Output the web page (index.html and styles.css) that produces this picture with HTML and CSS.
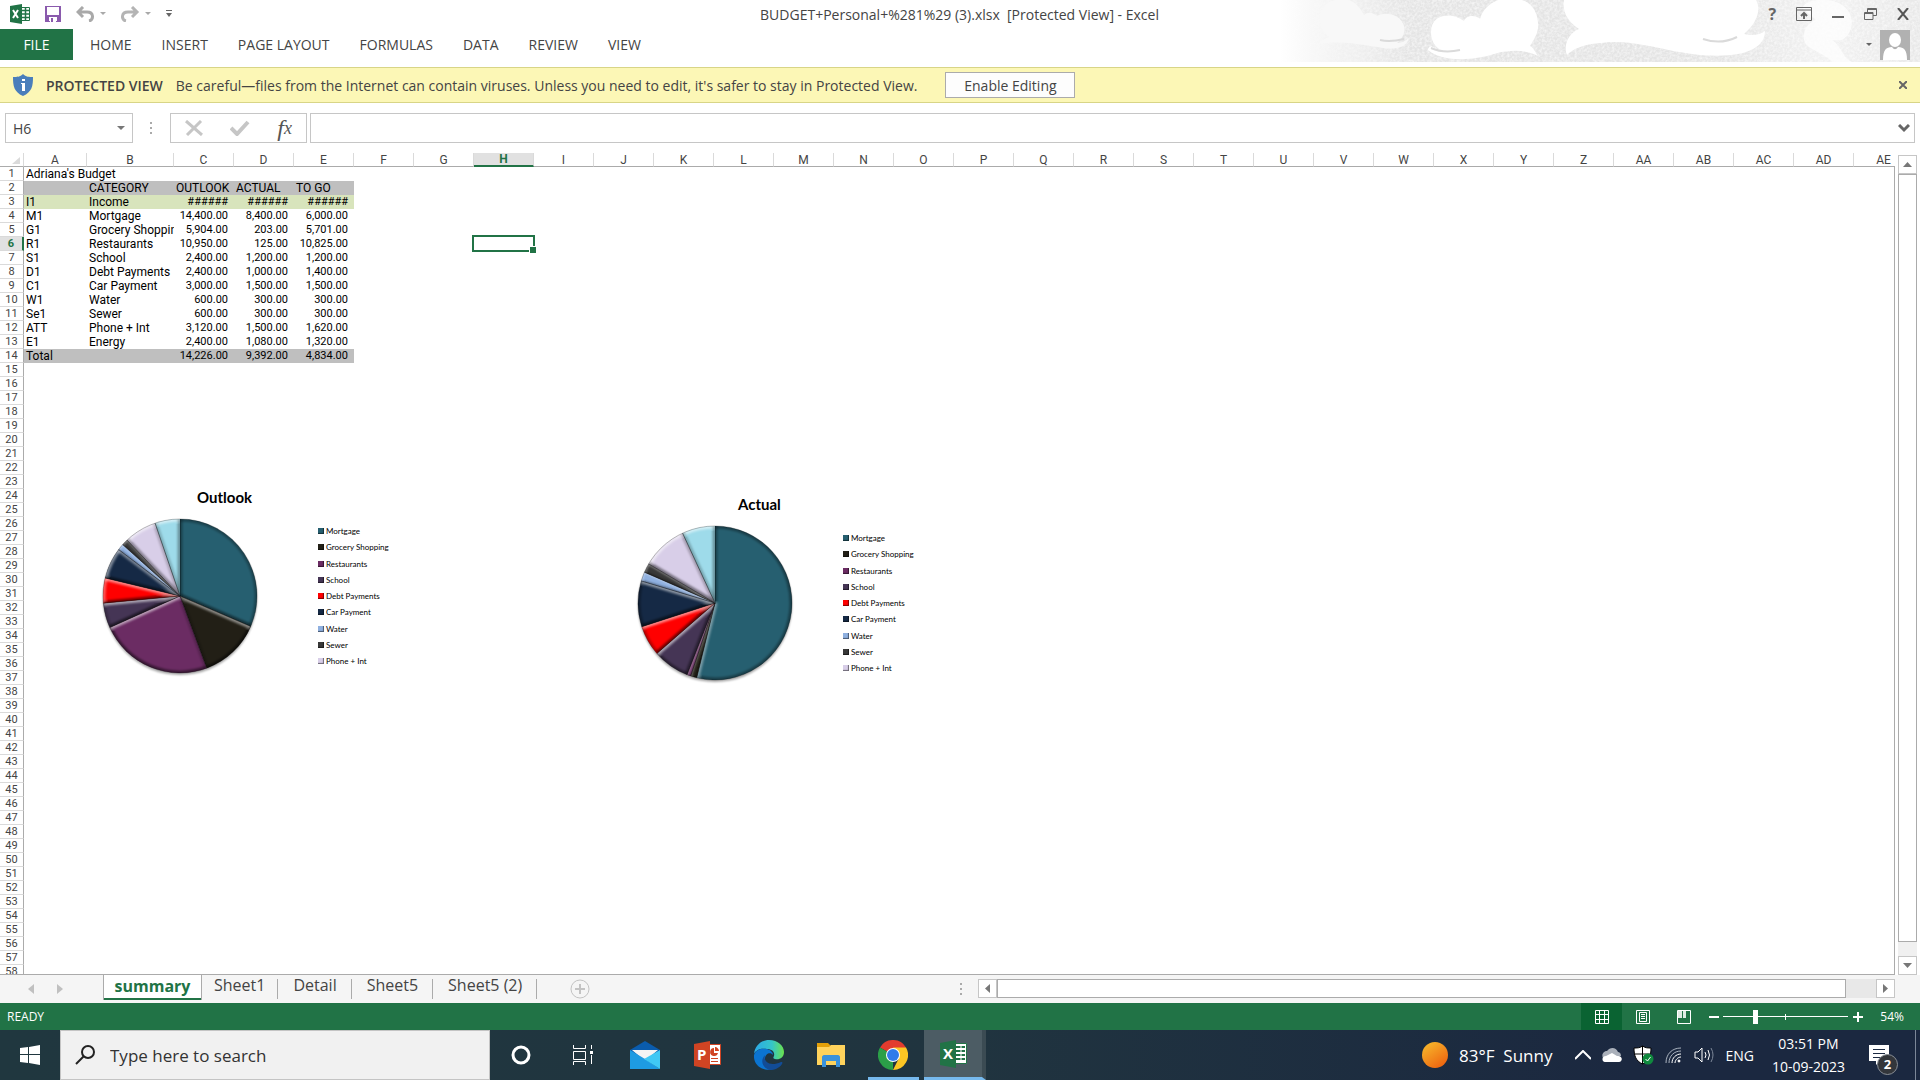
FILE: index.html
```html
<!DOCTYPE html>
<html lang="en">

<head>
    <meta charset="UTF-8">
    <meta name="viewport" content="width=device-width, initial-scale=1.0">
    <title>BUDGET+Personal+%281%29 (3).xlsx - Excel</title>
    <link rel="stylesheet" href="styles.css">
</head>

<body>
    <!-- Title bar and ribbon tabs -->
    <header class="top">
        <svg class="clouds" viewBox="0 0 640 62" preserveAspectRatio="none" aria-hidden="true">
            <defs>
                <linearGradient id="sky" x1="0" x2="1" y1="0" y2="0">
                    <stop offset="0" stop-color="#e4e4e4" stop-opacity="0" />
                    <stop offset="0.2" stop-color="#e4e4e4" />
                    <stop offset="0.7" stop-color="#e4e4e4" />
                    <stop offset="0.85" stop-color="#f2f2f2" />
                    <stop offset="1" stop-color="#e8e8e8" />
                </linearGradient>
                <filter id="grain" x="0" y="0" width="100%" height="100%">
                    <feTurbulence type="fractalNoise" baseFrequency="0.4" numOctaves="2" result="n" />
                    <feColorMatrix in="n" type="matrix" values="0 0 0 0 1  0 0 0 0 1  0 0 0 0 1  1.2 0 0 0 -0.4" result="w" />
                    <feComposite in="w" in2="SourceAlpha" operator="in" result="g" />
                    <feMerge><feMergeNode in="SourceGraphic" /><feMergeNode in="g" /></feMerge>
                </filter>
            </defs>
            <rect width="640" height="62" fill="url(#sky)" filter="url(#grain)" />
            <path fill="#f8f8f8" d="M40 22C38 8 48 0 58 0h10c8 2 13 9 16 15c4-4 10-2 13 1c8-5 24-2 27 10c2 8-3 13-7 17c6 0 9-3 12-5c-2 10-16 12-26 10c-20-3-40-8-64-4c2-4 6-5 10-7c-6-5-9-10-9-15z" />
            <path fill="#fff" d="M151 32c0-14 12-18 22-16c5 1 8 3 11 5c2-5 10-7 16-2c2-8 8-15 18-19h24c12 4 17 16 16 28c-1 8-6 14-8 18c4 2 5 6 8 10c-12-7-30-6-44-2c-22 7-52 8-66-4c0-3 2-3 3-4c3 2 6 3 8 3c-5-4-8-9-8-17z" />
            <path fill="#fff" d="M284 0h192c6 10 0 24-12 34c8 2 16 1 21-3c0 14-14 22-34 24c-50 5-90-18-130-12c-18 1-28 6-34 12c-4-10 2-22 12-26c-12-8-17-18-15-29z" />
            <path fill="#fff" d="M522 8c6-12 40-12 48 6c6 14-4 24-8 26h-10c10 6 10 18 20 22h-20c-8-10-26-12-28-22c-2-16 12-20 12-20z" opacity="0.7" />
            <path fill="none" stroke="#dadada" stroke-width="2" d="M423 39c12 4 24 3 34-2M151 48c9 4 20 4 29 2M100 40c8 2 16 1 24-1" />
        </svg>
        <div class="titlebar">
            <div class="quick">
                <svg width="20" height="20" viewBox="0 0 20 20"><path fill="#fff" stroke="#217346" d="M11 3.500h8.500v13H11z" /><path stroke="#217346" stroke-width="1.500" d="M12 6.500h7M12 10h7M12 13.500h7M15.500 4v12" /><path fill="#217346" d="M0 2l12-2v20L0 18z" /><path stroke="#fff" stroke-width="2" d="M3 6l5 8M8 6l-5 8" /></svg>
                <button class="icon save" aria-label="Save"><svg width="16" height="16" viewBox="0 0 16 16"><path fill="#8a5aad" d="M0 0h16v16H0z" /><path fill="#fff" d="M2 1h12v8H2zM4 11h8v5H4z" /><path fill="#8a5aad" d="M6 12h2v4H6zM4 15h1v1H4zM11 15h1v1h-1z" /></svg></button>
                <button class="icon" aria-label="Undo"><svg width="30" height="16" viewBox="0 0 30 16"><path fill="none" stroke="#a9a9a9" stroke-width="3" d="M7 1L2 6l5 5M2 6h9c7 0 7 8 2 9" /><path fill="#a9a9a9" d="M24 6h6l-3 3z" /></svg></button>
                <button class="icon" aria-label="Redo"><svg width="30" height="16" viewBox="0 0 30 16"><path fill="none" stroke="#b4b4b4" stroke-width="3" d="M11 1l5 5l-5 5M16 6H7c-7 0-7 8-2 9" /><path fill="#a9a9a9" d="M24 6h6l-3 3z" /></svg></button>
                <button class="icon" aria-label="Customize toolbar"><svg width="6" height="8" viewBox="0 0 6 8"><path fill="#666" d="M0 0h6v1H0zM0 3h6L3 7z" /></svg></button>
            </div>
            <h1>BUDGET+Personal+%281%29 (3).xlsx&nbsp; [Protected View] - Excel</h1>
            <div class="window-buttons">
                <button class="icon help" aria-label="Help">?</button>
                <button class="icon" aria-label="Ribbon options"><svg width="16" height="14" viewBox="0 0 16 14" fill="none" stroke="#666"><path d="M.5.500h15v13H.5zM1 3h14" /><path stroke-width="2" d="M8 12V6M5 9l3-3l3 3" /></svg></button>
                <button class="icon" aria-label="Minimize"><svg width="12" height="14" viewBox="0 0 12 14"><path fill="#666" d="M0 9h12v2H0z" /></svg></button>
                <button class="icon" aria-label="Restore"><svg width="13" height="12" viewBox="0 0 13 12" fill="none" stroke="#666"><path d="M3.500 4V.5h9v7H9M.5 4.500H9v7H.5z" /><path d="M3 1.500h10M0 5.500h9" /></svg></button>
                <button class="icon" aria-label="Close"><svg width="12" height="12" viewBox="0 0 12 12" stroke="#555" stroke-width="2"><path d="M1 0l10 12M11 0L1 12" /></svg></button>
            </div>
        </div>
        <nav class="ribbon">
            <a class="file" href="#file">FILE</a>
            <a href="#home">HOME</a>
            <a href="#insert">INSERT</a>
            <a href="#layout">PAGE LAYOUT</a>
            <a href="#formulas">FORMULAS</a>
            <a href="#data">DATA</a>
            <a href="#review">REVIEW</a>
            <a href="#view">VIEW</a>
            <button class="icon account" aria-label="Account">
                <svg width="6" height="4" viewBox="0 0 6 4"><path fill="#666" d="M0 0h6L3 3z" /></svg>
                <svg width="30" height="30" viewBox="0 0 30 30"><path fill="#b1b1b1" d="M0 0h30v30H0z" /><ellipse cx="15" cy="10" rx="6" ry="7" fill="#fff" /><path fill="#fff" d="M3 30c0-10 3-13 9-13c2 3 4 3 6 0c6 0 9 3 9 13z" /></svg>
            </button>
        </nav>
    </header>

    <!-- Protected view message -->
    <div class="protected">
        <svg width="20" height="22" viewBox="0 0 20 22"><path fill="#4a7ebb" d="M10 0c3 3 6 3 10 3c0 9-1 15-10 19C1 18 0 12 0 3c4 0 7 0 10-3z" /><path fill="#fff" d="M9 5h3v2H9zM8 9h4v8H9v-7H8z" /></svg>
        <strong>PROTECTED VIEW</strong>
        <span>Be careful—files from the Internet can contain viruses. Unless you need to edit, it's safer to stay in Protected View.</span>
        <button class="enable">Enable Editing</button>
        <button class="icon dismiss" aria-label="Dismiss"><svg width="8" height="8" viewBox="0 0 8 8" stroke="#666" stroke-width="2"><path d="M0 0l8 8M8 0L0 8" /></svg></button>
    </div>

    <!-- Formula bar -->
    <div class="formula-bar">
        <div class="name-box">
            <input type="text" value="H6" aria-label="Name box">
            <svg width="8" height="5" viewBox="0 0 8 5"><path fill="#777" d="M0 0h8L4 4z" /></svg>
        </div>
        <svg class="grip" width="2" height="12" viewBox="0 0 2 12"><path fill="#aaa" d="M0 0h2v2H0zM0 5h2v2H0zM0 10h2v2H0z" /></svg>
        <div class="fx-box">
            <button class="icon" aria-label="Cancel"><svg width="18" height="16" viewBox="0 0 18 16" stroke="#c6c6c6" stroke-width="3"><path d="M1 1l16 14M16 1L2 15" /></svg></button>
            <button class="icon" aria-label="Enter"><svg width="20" height="16" viewBox="0 0 20 16" fill="none" stroke="#c6c6c6" stroke-width="4"><path d="M1 8l6 6L18 2" /></svg></button>
            <button class="icon fx" aria-label="Insert function">f<sub>x</sub></button>
        </div>
        <div class="formula">
            <input type="text" aria-label="Formula">
            <svg width="12" height="9" viewBox="0 0 12 9" fill="none" stroke="#666" stroke-width="3"><path d="M1 1l5 5l5-5" /></svg>
        </div>
    </div>

    <!-- Worksheet -->
    <main class="work">
        <div class="sheet">
            <table id="grid"></table>
            <div class="selection"></div>
            <section class="chart outlook">
                <h2>Outlook</h2>
                <div class="plot" id="outlook"></div>
            </section>
            <section class="chart actual">
                <h2>Actual</h2>
                <div class="plot" id="actual"></div>
            </section>
        </div>
        <div class="vscroll">
            <button class="arrow" aria-label="Scroll up"><svg width="9" height="5" viewBox="0 0 9 5"><path fill="#777" d="M0 5h9L4.500 0z" /></svg></button>
            <div class="vthumb"></div>
            <button class="arrow" aria-label="Scroll down"><svg width="9" height="5" viewBox="0 0 9 5"><path fill="#777" d="M0 0h9L4.500 5z" /></svg></button>
        </div>
    </main>

    <!-- Sheet tabs -->
    <div class="tabs">
        <div class="tab-arrows">
            <button class="icon" aria-label="Previous sheet"><svg width="6" height="10" viewBox="0 0 6 10"><path fill="#c0c0c0" d="M6 0v10L0 5z" /></svg></button>
            <button class="icon" aria-label="Next sheet"><svg width="6" height="10" viewBox="0 0 6 10"><path fill="#c0c0c0" d="M0 0v10l6-5z" /></svg></button>
        </div>
        <button class="tab active">summary</button>
        <button class="tab">Sheet1</button>
        <button class="tab">Detail</button>
        <button class="tab">Sheet5</button>
        <button class="tab">Sheet5 (2)</button>
        <button class="icon add" aria-label="New sheet"><svg width="20" height="20" viewBox="0 0 20 20" fill="none" stroke="#c3c3c3"><circle cx="10" cy="10" r="9" /><path stroke-width="2" d="M5 10h10M10 5v10" /></svg></button>
        <svg class="tab-grip" width="2" height="12" viewBox="0 0 2 12"><path fill="#aaa" d="M0 0h2v2H0zM0 5h2v2H0zM0 10h2v2H0z" /></svg>
        <div class="hscroll">
            <button class="arrow" aria-label="Scroll left"><svg width="5" height="9" viewBox="0 0 5 9"><path fill="#777" d="M5 0v9L0 4.500z" /></svg></button>
            <div class="hthumb"></div>
            <button class="arrow" aria-label="Scroll right"><svg width="5" height="9" viewBox="0 0 5 9"><path fill="#777" d="M0 0v9l5-4.500z" /></svg></button>
        </div>
    </div>

    <!-- Status bar -->
    <div class="status">
        <span class="ready">READY</span>
        <button class="view on" aria-label="Normal view"><svg width="14" height="14" viewBox="0 0 14 14" fill="none" stroke="#fff"><path d="M.5.500h13v13H.5zM4.500 0v14M9.500 0v14M0 4.500h14M0 9.500h14" /></svg></button>
        <button class="view" aria-label="Page layout view"><svg width="14" height="14" viewBox="0 0 14 14" fill="none" stroke="#fff"><path d="M.5.500h13v13H.5zM3.500 2.500h7v9h-7zM5 4.500h4M5 6.500h4M5 8.500h4" /></svg></button>
        <button class="view" aria-label="Page break view"><svg width="14" height="14" viewBox="0 0 14 14"><path fill="none" stroke="#fff" d="M.5.500h13v13H.5z" /><path fill="#e0ebe4" d="M1 1h4v7H1zM6 1h3v7H6z" /></svg></button>
        <button class="icon zoom-button" aria-label="Zoom out"><svg width="10" height="10" viewBox="0 0 10 10"><path fill="#fff" d="M0 4h10v2H0z" /></svg></button>
        <input class="zoom" type="range" min="10" max="400" value="106" aria-label="Zoom">
        <button class="icon zoom-button" aria-label="Zoom in"><svg width="10" height="10" viewBox="0 0 10 10"><path fill="#fff" d="M0 4h10v2H0zM4 0h2v10H4z" /></svg></button>
        <span class="percent">54%</span>
    </div>

    <!-- Windows taskbar -->
    <footer class="taskbar">
        <button class="icon start" aria-label="Start"><svg width="20" height="20" viewBox="0 0 20 20"><path fill="#fff" d="M0 3l8-1v7H0zM9 2l11-2v9H9zM0 10h8v8l-8-1zM9 10h11v10L9 18z" /></svg></button>
        <label class="search">
            <svg width="21" height="20" viewBox="0 0 21 20" fill="none" stroke="#222" stroke-width="2"><circle cx="13" cy="7" r="6" /><path d="M9 11l-8 8" /></svg>
            <input type="text" placeholder="Type here to search">
        </label>
        <button class="app" aria-label="Cortana"><svg width="20" height="20" viewBox="0 0 20 20"><circle cx="10" cy="10" r="8" fill="none" stroke="#fff" stroke-width="3" /></svg></button>
        <button class="app" aria-label="Task view"><svg width="20" height="20" viewBox="0 0 20 20" fill="none" stroke="#fff"><path d="M.5 0v3.500h12V0M.5 6.500h12v8H.5zM.5 20v-3.500h12V20M18.500 0v4M18.500 10v9" /><path fill="#fff" stroke="none" d="M17 6h3v3h-3z" /></svg></button>
        <button class="app" aria-label="Mail"><svg width="30" height="28" viewBox="0 0 30 28"><path fill="#0a5cad" d="M0 9L15 0l15 9v6H0z" /><path fill="#f4f4f4" d="M2 9h26L15 20z" /><path fill="#1e9be2" d="M0 9l15 9l15 10H0z" /><path fill="#40c8f4" d="M30 9v19L14 18z" /></svg></button>
        <button class="app" aria-label="PowerPoint"><svg width="27" height="28" viewBox="0 0 27 28"><path fill="#fff" stroke="#d04423" d="M14 3.500h12.500v20H14z" /><path fill="#d04423" d="M20 7a4 4 0 1 0 4 5h-4zM21 6c2 0 4 2 4 4h-4zM17 17h7v1h-7zM17 20h7v1h-7z" /><path fill="#d04423" d="M0 3l16-3v28L0 25z" /><text x="3" y="19" class="app-letter">P</text></svg></button>
        <button class="app" aria-label="Edge"><svg width="30" height="30" viewBox="0 0 30 30">
            <defs><linearGradient id="edge"><stop offset="0" stop-color="#2aa9e8" /><stop offset="0.600" stop-color="#35c5c8" /><stop offset="1" stop-color="#6be24c" /></linearGradient></defs>
            <path fill="url(#edge)" d="M0 14C1 5 8 0 15 0c9 0 15 6 15 12c0 6-5 8-9 7c-2-1-2-1-1-3c1-4-2-7-7-7C6 8 2 10 0 14z" /><path fill="#0b74d1" d="M0 15C2 9 8 8 13 9c4 1 6 4 6 6c-2-3-8-2-8 4c0 6 4 10 9 10C10 32-1 26 0 15z" /><path fill="#124c96" d="M11 15c-2 7 5 12 16 7c1 0 2 0 1 2c-3 5-9 6-12 6c-8-2-10-10-5-15z" /></svg></button>
        <button class="app" aria-label="File Explorer"><svg width="28" height="24" viewBox="0 0 28 24"><path fill="#e3a008" d="M0 0h11l3 3v3H0z" /><path fill="#ffd35c" d="M0 4h12l2-2h14v20H0z" /><path fill="#3a92dc" d="M5 24V14c0-1 1-2 2-2h14c1 0 2 1 2 2v10h-4v-6H9v6z" /></svg></button>
        <button class="app running" aria-label="Chrome"><svg width="30" height="30" viewBox="0 0 30 30"><path fill="#e33b2e" d="M15 15L2 7.500A15 15 0 0 1 28 7.500z" /><path fill="#2b9f48" d="M15 15v15A15 15 0 0 1 2 7.500z" /><path fill="#fcc624" d="M15 7.500h13A15 15 0 0 1 15 30l6-12z" /><circle cx="15" cy="15" r="7" fill="#fff" /><circle cx="15" cy="15" r="6" fill="#2f7bea" /></svg></button>
        <button class="app current" aria-label="Excel"><svg width="27" height="28" viewBox="0 0 27 28"><path fill="#fff" stroke="#217346" d="M14 3.500h12.500v20H14z" /><path stroke="#217346" stroke-width="2" d="M16 7h9M16 11h9M16 15h9M16 19h9" /><path stroke="#fff" d="M21 4v19" /><path fill="#217346" d="M0 3l16-3v28L0 25z" /><text x="3" y="19" class="app-letter">X</text></svg></button>

        <div class="tray">
            <svg class="sun" width="26" height="26" viewBox="0 0 26 26"><defs><linearGradient id="sun" x1="0" y1="0" x2="0.700" y2="1"><stop offset="0" stop-color="#f8c02e" /><stop offset="1" stop-color="#ee6510" /></linearGradient></defs><circle cx="13" cy="13" r="13" fill="url(#sun)" /></svg>
            <span class="weather">83°F&nbsp; Sunny</span>
            <svg class="chevron" width="16" height="10" viewBox="0 0 16 10" fill="none" stroke="#fff" stroke-width="2"><path d="M0 9l8-8l8 8" /></svg>
            <svg width="20" height="14" viewBox="0 0 20 14"><path fill="#aab0ba" d="M1 10c-2-4 1-7 4-7c3-4 9-4 11 1c3 0 3 4 3 4z" /><path fill="#fff" d="M3 14c-4-1-3-6 1-6l6-3l5 3c6-1 6 6 2 6z" /></svg>
            <svg width="21" height="20" viewBox="0 0 21 20"><path fill="#fff" stroke="#000" d="M9.500 1c3 2 5 2 8.500 2c0 8-2 13-8.500 16C3 16 1 11 1 3c3 0 6 0 8.500-2z" /><path stroke="#000" d="M9.500 1v18M1 9h17" /><circle cx="15" cy="14" r="5.500" fill="#10893e" /><path fill="none" stroke="#fff" d="M12.500 14l2 2l3-4" /></svg>
            <svg width="18" height="16" viewBox="0 0 18 16" fill="none" stroke="#aab3bf"><path d="M1 16C1 7 7 1 16 1M4 16c0-7 5-12 12-12" /><path stroke="#fff" d="M7 16c0-5 4-9 9-9M10 16c0-3 3-6 6-6" /><circle cx="14" cy="14" r="1" fill="#fff" stroke="#fff" /></svg>
            <svg width="20" height="16" viewBox="0 0 20 16" fill="none" stroke="#fff"><path d="M1 5h3l4-4v14l-4-4H1zM11 5q2 3 0 6M14 3q3 5 0 10" /><path stroke="#7c8798" d="M17 1q4 7 0 14" /></svg>
            <span class="lang">ENG</span>
            <div class="clock"><span>03:51 PM</span><span>10-09-2023</span></div>
            <button class="icon notes" aria-label="Notifications">
                <svg width="20" height="20" viewBox="0 0 20 20"><path fill="#fff" d="M0 0h20v16h-9l-4 4v-4H0z" /><path stroke="#1c2a42" d="M4 4.500h12M4 8.500h12M4 12.500h8" /></svg>
                <span class="badge">2</span>
            </button>
        </div>
    </footer>

    <script src="script.js"></script>
</body>

</html>
```
FILE: styles.css
```css
* {
    box-sizing: border-box;
}

body {
    margin: 0;
    height: 100vh;
    display: flex;
    flex-direction: column;
    overflow: hidden;
    background: #fff;
    color: #444;
    font-family: "Open Sans", "Noto Sans", sans-serif;
    font-size: 14px;
}

button,
input {
    font: inherit;
    color: inherit;
    margin: 0;
}

svg {
    display: block;
    flex: none;
}

.icon {
    display: flex;
    align-items: center;
    padding: 0;
    border: none;
    background: none;
}

/* Title bar */
.top {
    position: relative;
    flex: none;
    height: 67px;
}

.clouds {
    position: absolute;
    right: 0;
    top: 0;
    width: 640px;
    height: 62px;
    z-index: -1;
}

.titlebar {
    display: flex;
    align-items: center;
    height: 28px;
    padding: 0 11px 0 10px;
}

.quick,
.window-buttons {
    display: flex;
    align-items: center;
    flex: 1;
    gap: 15px;
}

.window-buttons {
    justify-content: flex-end;
    gap: 20px;
}

.titlebar h1 {
    margin: 0;
    font-size: 14px;
    font-weight: normal;
}

.help {
    font-size: 16px;
    font-weight: bold;
    color: #666;
}

.ribbon {
    display: flex;
    align-items: center;
    height: 31px;
    gap: 30px;
    margin-top: 1px;
    padding-right: 10px;
}

.ribbon a {
    color: #444;
    text-decoration: none;
}

.ribbon .file {
    width: 73px;
    margin-right: -13px;
    line-height: 31px;
    text-align: center;
    background: #217346;
    color: #fff;
}

.account {
    margin-left: auto;
    gap: 8px;
}

/* Protected view */
.protected {
    display: flex;
    align-items: center;
    flex: none;
    height: 36px;
    padding: 0 13px;
    border: solid #d8d587;
    border-width: 1px 0;
    background: #fcf7b6;
}

.protected strong {
    margin: 0 13px;
    font-weight: 600;
}

.enable {
    width: 130px;
    height: 26px;
    margin-left: 28px;
    padding: 0;
    border: 1px solid #ababab;
    background: #fdfdfd;
}

.dismiss {
    margin-left: auto;
}

/* Formula bar */
.formula-bar {
    display: flex;
    align-items: center;
    flex: none;
    height: 30px;
    margin: 10px 5px;
}

.name-box,
.fx-box,
.formula {
    display: flex;
    align-items: center;
    height: 30px;
    border: 1px solid #c6c6c6;
}

.name-box {
    width: 128px;
    padding: 0 7px;
}

.name-box input,
.formula input {
    flex: 1;
    width: 0;
    padding: 0;
    border: none;
    outline: none;
}

.grip {
    margin: 0 18px 0 17px;
}

.fx-box {
    width: 137px;
    padding: 0 14px;
    justify-content: space-between;
    margin-right: 3px;
}

.fx {
    font: italic 24px "Liberation Serif", serif;
    line-height: 28px;
    color: #555;
}

.fx sub {
    font-size: 18px;
    line-height: 16px;
}

.formula {
    flex: 1;
    padding: 0 4px;
}

/* Worksheet */
.work {
    display: flex;
    flex: 1;
    min-height: 0;
    background: #fff;
}

.sheet {
    position: relative;
    flex: 1;
    min-width: 0;
    overflow: hidden;
    border-bottom: 1px solid #ababab;
}

.sheet::after {
    content: "";
    position: absolute;
    top: 13px;
    right: 0;
    bottom: 0;
    border-right: 1px solid #ababab;
}

#grid {
    table-layout: fixed;
    width: 1914px;
    border-collapse: separate;
    border-spacing: 0;
    font-family: Roboto, sans-serif;
    font-size: 12px;
    line-height: 14px;
    color: #000;
}

#grid th,
#grid td {
    height: 14px;
    padding: 0;
    font-weight: normal;
    white-space: nowrap;
}

#grid thead th {
    padding-top: 1px;
    border-right: 1px solid #dadada;
    border-bottom: 1px solid #ababab;
    line-height: 12px;
    color: #444;
}

#grid tbody th {
    border-right: 1px solid #ababab;
    border-bottom: 1px solid #dadada;
    font-size: 11px;
    line-height: 13px;
    color: #444;
}

#grid thead .picked,
#grid tbody .picked {
    background: #e1e1e1;
    color: #217346;
    font-weight: bold;
}

#grid thead .picked {
    padding-top: 0;
    border-bottom: 2px solid #217346;
}

#grid tbody .picked {
    border-right: 2px solid #217346;
}

#grid tbody td {
    padding-left: 2px;
}

#grid tbody .clip {
    overflow: hidden;
}

#grid tbody .number {
    padding: 0 6px 0 0;
    font-size: 11px;
    text-align: right;
}

.gray {
    background: #bfbfbf;
}

.green {
    background: #d8e4bc;
}

.col-head {
    width: 24px;
}

.col-a {
    width: 63px;
}

.col-b {
    width: 87px;
}

.selection {
    position: absolute;
    left: 472px;
    top: 82px;
    width: 63px;
    height: 17px;
    border: 2px solid #217346;
}

.selection::after {
    content: "";
    position: absolute;
    right: -3px;
    bottom: -3px;
    width: 6px;
    height: 6px;
    border: solid #fff;
    border-width: 1px 0 0 1px;
    background: #217346;
}

/* Charts */
.chart {
    position: absolute;
    width: 300px;
    color: #000;
    font-family: Lato, sans-serif;
}

.outlook {
    left: 98px;
    top: 333px;
}

.actual {
    left: 633px;
    top: 340px;
}

.chart h2 {
    margin: 0 0 6px;
    padding-left: 99px;
    font-size: 15px;
    line-height: 22px;
    font-weight: bold;
}

.actual h2 {
    padding-left: 105px;
}

.plot {
    display: flex;
    gap: 55px;
}

.actual .plot {
    gap: 45px;
}

.legend {
    display: flex;
    flex-direction: column;
    justify-content: space-between;
    height: 140px;
    margin: 12px 0 0;
    padding: 0;
    list-style: none;
    font-size: 8px;
    line-height: 10px;
}

.legend li {
    display: flex;
    align-items: center;
    gap: 2px;
}

.swatch {
    width: 6px;
    height: 6px;
    box-shadow: inset -1px -1px 1px rgba(0, 0, 0, 0.5);
}

/* Scroll bars */
.vscroll {
    display: flex;
    flex-direction: column;
    justify-content: space-between;
    width: 19px;
    margin: 2px 3px 0 3px;
    background: #f0f0f0;
}

.vthumb {
    flex: 1;
    margin-bottom: 14px;
    border: 1px solid #ababab;
    background: #fff;
}

.arrow {
    display: flex;
    align-items: center;
    justify-content: center;
    flex: none;
    width: 19px;
    height: 19px;
    padding: 0;
    border: 1px solid #c6c6c6;
    background: #fff;
}

/* Sheet tabs */
.tabs {
    display: flex;
    flex: none;
    height: 28px;
    padding-right: 25px;
    background: #f5f5f5;
    font-size: 16px;
}

.tab-arrows {
    display: flex;
    gap: 23px;
    width: 103px;
    padding-left: 28px;
}

.tab {
    position: relative;
    height: 20px;
    padding: 0 15px;
    border: none;
    background: none;
    line-height: 20px;
}

.active + .tab {
    padding: 0 13px 0 12px;
}

.tab:not(.active)::after {
    content: "";
    position: absolute;
    right: 0;
    top: 4px;
    height: 20px;
    border-right: 1px solid #ababab;
}

.tab.active {
    height: 25px;
    width: 99px;
    padding: 0 0 4px;
    border: solid #ababab;
    border-width: 0 1px;
    box-shadow: inset 0 -2px #217346;
    background: #fff;
    color: #217346;
    font-weight: bold;
}

.add {
    margin-left: 33px;
}

.tab-grip {
    margin: 8px 16px 0 auto;
}

.hscroll {
    display: flex;
    width: 48.4%;
    margin: 4px 0 5px;
    background: #e8e8e8;
}

.hthumb {
    flex: 1;
    margin-right: 30px;
    border: 1px solid #ababab;
    background: #fff;
}

/* Status bar */
.status {
    display: flex;
    align-items: center;
    flex: none;
    height: 27px;
    padding-right: 16px;
    background: #217346;
    color: #fff;
    font-size: 12px;
}

.ready {
    flex: 1;
    padding-left: 7px;
}

.view {
    display: flex;
    align-items: center;
    justify-content: center;
    width: 41px;
    height: 27px;
    padding: 0;
    border: none;
    background: none;
}

.view.on {
    background: #0a6332;
}

.zoom-button {
    margin-left: 5px;
}

.zoom {
    appearance: none;
    width: 125px;
    height: 14px;
    margin: 0 0 0 4px;
    background: linear-gradient(#fff, #fff) 50% 50% / 1px 6px no-repeat, linear-gradient(#fff, #fff) 50% 50% / 100% 1px no-repeat;
}

.zoom::-webkit-slider-thumb {
    appearance: none;
    width: 5px;
    height: 14px;
    background: #fff;
}

.percent {
    width: 41px;
    text-align: right;
}

/* Taskbar */
.taskbar {
    display: flex;
    flex: none;
    height: 50px;
    background: linear-gradient(90deg, #20373f, #20343f 50%, #1b2840 85%);
    color: #fff;
}

.start {
    width: 60px;
    justify-content: center;
}

.search {
    display: flex;
    align-items: center;
    gap: 14px;
    width: 430px;
    padding: 0 14px;
    border: 1px solid #c4c4c4;
    background: #f1f1f1;
    color: #222;
}

.search input {
    flex: 1;
    width: 0;
    padding: 0;
    border: none;
    outline: none;
    background: none;
    font-size: 17px;
}

.search input::placeholder {
    color: #333;
}

.app {
    display: flex;
    align-items: center;
    justify-content: center;
    width: 62px;
    padding: 0;
    border: none;
    background: none;
}

.running {
    background: linear-gradient(#76b9ed, #76b9ed) 50% 100% / 51px 3px no-repeat;
}

.current {
    border-bottom: 3px solid #76b9ed;
    border-right: 4px solid #3b4b53;
    background: #4c5c64;
}

.app-letter {
    font: bold 15px "Open Sans", sans-serif;
    fill: #fff;
}

.tray {
    display: flex;
    align-items: center;
    gap: 11px;
    margin-left: auto;
    margin-right: 4px;
    padding-right: 26px;
    border-right: 1px solid #7c8798;
}

.weather {
    font-size: 17px;
}

.chevron {
    margin-left: 12px;
}

.lang {
    margin-right: 7px;
}

.clock {
    display: flex;
    flex-direction: column;
    align-items: center;
    line-height: 23px;
    margin-right: 13px;
}

.notes {
    position: relative;
}

.badge {
    position: absolute;
    left: 8px;
    top: 9px;
    width: 21px;
    height: 21px;
    border: 1px solid #8a8f96;
    border-radius: 50%;
    background: #33363b;
    color: #fff;
    font-size: 13px;
    font-weight: bold;
    line-height: 19px;
    text-align: center;
}
```
FILE: script.js
```js
const rows = [
    ["Adriana's Budget"],
    ["", "CATEGORY", "OUTLOOK", "ACTUAL", "TO GO"],
    ["I1", "Income", "######", "######", "######"],
    ["M1", "Mortgage", "14,400.00", "8,400.00", "6,000.00"],
    ["G1", "Grocery Shopping", "5,904.00", "203.00", "5,701.00"],
    ["R1", "Restaurants", "10,950.00", "125.00", "10,825.00"],
    ["S1", "School", "2,400.00", "1,200.00", "1,200.00"],
    ["D1", "Debt Payments", "2,400.00", "1,000.00", "1,400.00"],
    ["C1", "Car Payment", "3,000.00", "1,500.00", "1,500.00"],
    ["W1", "Water", "600.00", "300.00", "300.00"],
    ["Se1", "Sewer", "600.00", "300.00", "300.00"],
    ["ATT", "Phone + Int", "3,120.00", "1,500.00", "1,620.00"],
    ["E1", "Energy", "2,400.00", "1,080.00", "1,320.00"],
    ["Total", "", "14,226.00", "9,392.00", "4,834.00"]
];
const fills = { 2: "gray", 3: "green", 14: "gray" };
const columnCount = 31;

function columnName(i) {
    return i < 26 ? String.fromCharCode(65 + i) : "A" + String.fromCharCode(39 + i);
}

function buildGrid() {
    let cols = '<col class="col-head"><col class="col-a"><col class="col-b">';
    let head = '<th><svg width="22" height="12" viewBox="0 0 22 12"><path fill="#dadada" d="M20 3v7h-8z"/></svg></th>';
    for (let c = 0; c < columnCount; c++) {
        if (c > 1) cols += "<col>";
        head += `<th${c === 7 ? ' class="picked"' : ""}>${columnName(c)}</th>`;
    }

    let body = "";
    for (let r = 1; r <= 58; r++) {
        body += `<tr><th${r === 6 ? ' class="picked"' : ""}>${r}</th>`;
        const row = rows[r - 1] || [];
        for (let c = 0; c < columnCount; c++) {
            const names = [];
            if (fills[r] && c < 5) names.push(fills[r]);
            if (c > 1 && c < 5 && r > 2) names.push("number");
            if (r > 1 && c < 5) names.push("clip");
            body += `<td${names.length ? ` class="${names.join(" ")}"` : ""}>${row[c] || ""}</td>`;
        }
        body += "</tr>";
    }
    document.getElementById("grid").innerHTML =
        `<colgroup>${cols}</colgroup><thead><tr>${head}</tr></thead><tbody>${body}</tbody>`;
}

const names = ["Mortgage", "Grocery Shopping", "Restaurants", "School", "Debt Payments",
    "Car Payment", "Water", "Sewer", "Phone + Int", "Energy"];
const colors = ["#265f70", "#221f16", "#6b2c63", "#453555", "#ff0000",
    "#152945", "#8fb0e0", "#383838", "#d8cee8", "#9edbea"];

// bevel: an edge that faces up gets a light line, one that faces down a dark one
function edge(d, nx, ny, width) {
    const lit = -ny * 0.9 - nx * 0.3;
    const color = lit > 0.35 ? "#fff" : "#000";
    const opacity = Math.min(0.55, 0.2 + Math.abs(lit) * 0.4).toFixed(2);
    return `<path d="${d}" fill="none" stroke="${color}" stroke-width="${width}" opacity="${opacity}"/>`;
}

function drawPie(id, values) {
    const total = values.reduce((a, b) => a + b, 0);
    const r = 77;
    let angle = 0;
    let svg = "";
    values.forEach((value, i) => {
        const a = angle;
        const b = angle + value / total * Math.PI * 2;
        angle = b;
        const x1 = r * Math.sin(a), y1 = -r * Math.cos(a);
        const x2 = r * Math.sin(b), y2 = -r * Math.cos(b);
        const large = b - a > Math.PI ? 1 : 0;
        const arc = `M${x1} ${y1}A${r} ${r} 0 ${large} 1 ${x2} ${y2}`;
        const mid = (a + b) / 2;
        const width = b - a < 0.15 ? 2 : 5;
        svg += `<clipPath id="${id}${i}"><path d="${arc}L0 0z"/></clipPath>
            <path d="${arc}L0 0z" fill="${colors[i]}"/>
            <g clip-path="url(#${id}${i})"><g filter="url(#${id}-soft)">
            ${edge(arc, Math.sin(mid), -Math.cos(mid), width)}
            ${edge(`M0 0L${x1} ${y1}`, -Math.cos(a), -Math.sin(a), width)}
            ${edge(`M0 0L${x2} ${y2}`, Math.cos(b), Math.sin(b), width)}
            </g></g>
            <path d="M0 0L${x1} ${y1}" stroke="#000" stroke-width="1" opacity="0.5"/>`;
    });
    const items = names.slice(0, 9).map((name, i) =>
        `<li><span class="swatch" style="background:${colors[i]}"></span>${name}</li>`).join("");
    document.getElementById(id).innerHTML =
        `<svg width="165" height="165" viewBox="-82 -82 165 165">
            <filter id="${id}-soft" filterUnits="userSpaceOnUse" x="-85" y="-85" width="170" height="170"><feGaussianBlur stdDeviation="1"/></filter>
            <circle cy="2" r="77" fill="#000" opacity="0.35" filter="url(#${id}-soft)"/>
            ${svg}
            <circle r="77" fill="none" stroke="#000" stroke-width="1" opacity="0.25"/>
        </svg><ul class="legend">${items}</ul>`;
}

buildGrid();
drawPie("outlook", [14400, 5904, 10950, 2400, 2400, 3000, 600, 600, 3120, 2400]);
drawPie("actual", [8400, 203, 125, 1200, 1000, 1500, 300, 300, 1500, 1080]);
```
